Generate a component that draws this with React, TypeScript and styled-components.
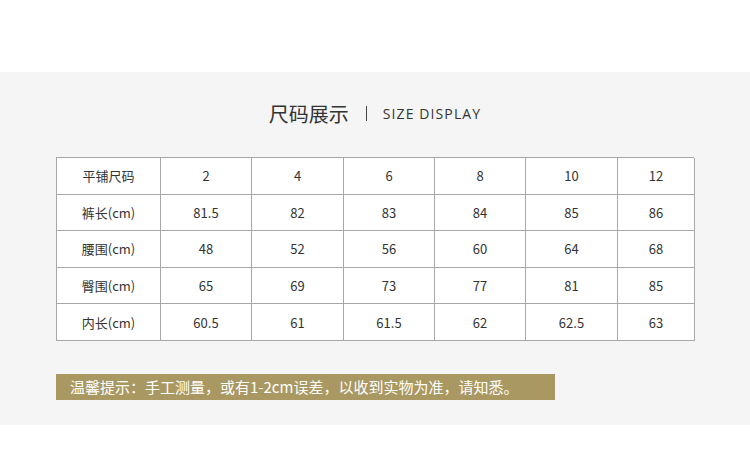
import styled, { createGlobalStyle } from "styled-components";

const GlobalStyle = createGlobalStyle`
  body {
    margin: 0;
    background: #ffffff;
    font-family: "Noto Sans CJK SC", "Noto Sans", sans-serif;
  }
`;

const columns = ["104px", "91px", "92px", "91px", "91px", "92px", "77px"];

const rows = [
  ["平铺尺码", "2", "4", "6", "8", "10", "12"],
  ["裤长(cm)", "81.5", "82", "83", "84", "85", "86"],
  ["腰围(cm)", "48", "52", "56", "60", "64", "68"],
  ["臀围(cm)", "65", "69", "73", "77", "81", "85"],
  ["内长(cm)", "60.5", "61", "61.5", "62", "62.5", "63"],
];

function App() {
  return (
    <>
      <GlobalStyle />
      <StyledPage>
        <StyledSection>
          <StyledTitle>
            <StyledTitleCn>尺码展示</StyledTitleCn>
            <StyledDivider />
            <StyledTitleEn>SIZE DISPLAY</StyledTitleEn>
          </StyledTitle>
          <StyledTable>
            {rows.map((row, r) =>
              row.map((cell, c) => (
                <StyledCell
                  key={`${r}-${c}`}
                  $lastCol={c === row.length - 1}
                  $lastRow={r === rows.length - 1}
                >
                  {cell}
                </StyledCell>
              ))
            )}
          </StyledTable>
          <StyledNote>温馨提示：手工测量，或有1-2cm误差，以收到实物为准，请知悉。</StyledNote>
        </StyledSection>
      </StyledPage>
    </>
  );
}

export default App;

const StyledPage = styled.div`
  width: 750px;
  height: 456px;
  padding-top: 72px;
  box-sizing: border-box;
  background: #ffffff;
`;

const StyledSection = styled.div`
  height: 353px;
  background: #f5f5f5;
  padding: 26px 56px 0;
  box-sizing: border-box;
  display: flex;
  flex-direction: column;
`;

const StyledTitle = styled.div`
  display: flex;
  align-items: center;
  justify-content: center;
  height: 30px;
  gap: 0;
`;

const StyledTitleCn = styled.span`
  font-size: 20px;
  color: #333333;
  letter-spacing: 0px;
`;

const StyledDivider = styled.span`
  width: 1px;
  height: 15px;
  background: #444444;
  margin: 0 16px 0 17px;
`;

const StyledTitleEn = styled.span`
  font-family: "Open Sans", "Noto Sans", sans-serif;
  font-size: 14px;
  letter-spacing: 1.1px;
  color: #333333;
`;

const StyledTable = styled.div`
  margin-top: 29px;
  display: grid;
  grid-template-columns: ${columns.join(" ")};
  grid-auto-rows: 36.6px;
  width: 638px;
  border-top: 1px solid #a8a8a8;
  border-left: 1px solid #a8a8a8;
  box-sizing: border-box;
  background: #ffffff;
`;

const StyledCell = styled.div<{ $lastCol: boolean; $lastRow: boolean }>`
  display: flex;
  align-items: center;
  justify-content: center;
  border-right: 1px solid #a8a8a8;
  border-bottom: 1px solid #a8a8a8;
  font-size: 13px;
  color: #333333;
  font-family: "Noto Sans CJK SC", "Noto Sans", sans-serif;
`;

const StyledNote = styled.div`
  margin-top: 33px;
  width: 499px;
  height: 26px;
  background: #a99862;
  color: #ffffff;
  font-size: 15px;
  line-height: 26px;
  padding-left: 14px;
  box-sizing: border-box;
  white-space: nowrap;
`;
